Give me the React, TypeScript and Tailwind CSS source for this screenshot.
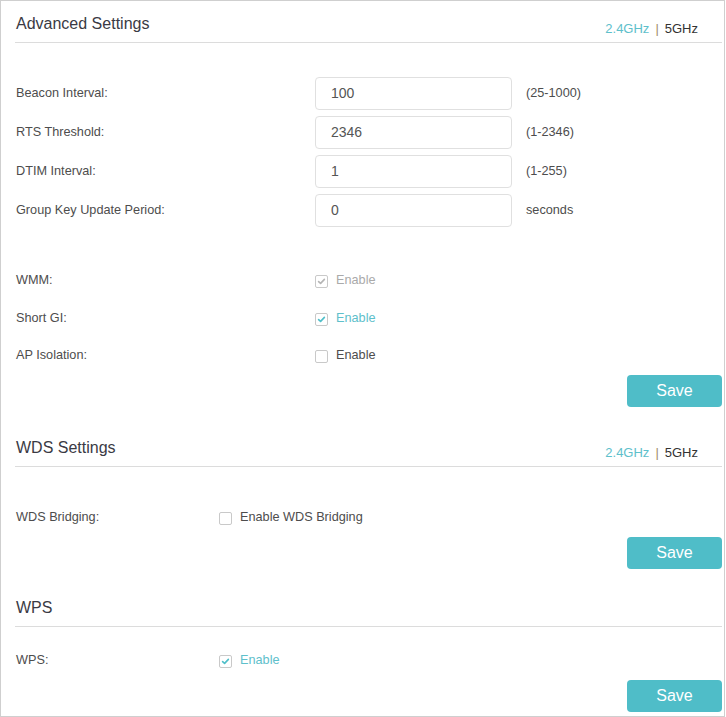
import React from "react";

const TEAL = "text-[#5ec0cb]";

function Check({ checked, disabled }: { checked?: boolean; disabled?: boolean }) {
  return (
    <span className="inline-flex w-[13px] h-[13px] border border-[#c9c9c9] rounded-[2px] bg-white items-center justify-center shrink-0">
      {checked && (
        <svg width="9" height="9" viewBox="0 0 9 9">
          <path
            d="M1.6 4.6 L3.6 6.4 L7.4 2.4"
            fill="none"
            stroke={disabled ? "#b5b5b5" : "#4fbfc9"}
            strokeWidth="1.6"
            strokeLinecap="round"
            strokeLinejoin="round"
          />
        </svg>
      )}
    </span>
  );
}

function Heading({ title, ghz, className }: { title: string; ghz?: boolean; className?: string }) {
  return (
    <div className={"h-[42px] pt-[14px] border-b border-[#dcdcdc] flex justify-between " + (className || "")}>
      <div className="text-[16px] leading-[18px] text-[#3a3a44] pl-[1px]">{title}</div>
      {ghz && (
        <div className="text-[13px] leading-[18px] pt-[1px] pr-[24px] flex items-center">
          <span className={TEAL}>2.4GHz</span>
          <span className="text-[#a08c6a] mx-[6px]">|</span>
          <span className="text-[#333]">5GHz</span>
        </div>
      )}
    </div>
  );
}

function InputRow({ label, value, hint }: { label: string; value: string; hint: string }) {
  return (
    <div className="flex items-center h-[33px] mb-[6px]">
      <div className="w-[300px] pl-[1px] text-[12.7px] text-[#4d4d4d]">{label}</div>
      <div className="w-[197px] h-[33px] border border-[#e0e0e0] rounded-[4px] flex items-center pl-[15px] text-[14px] text-[#555]">
        {value}
      </div>
      <div className="ml-[14px] text-[12.7px] text-[#4d4d4d]">{hint}</div>
    </div>
  );
}

function CheckRow({
  label,
  text,
  checked,
  disabled,
  labelW,
  className,
}: {
  label: string;
  text: string;
  checked?: boolean;
  disabled?: boolean;
  labelW: string;
  className?: string;
}) {
  const color = disabled ? "text-[#aaaaaa]" : checked ? TEAL : "text-[#4d4d4d]";
  return (
    <div className={"flex items-center h-[20px] " + (className || "")}>
      <div className={labelW + " pl-[1px] text-[12.7px] text-[#4d4d4d]"}>{label}</div>
      <Check checked={checked} disabled={disabled} />
      <span className={"ml-[8px] text-[12.7px] " + color}>{text}</span>
    </div>
  );
}

function Save({ className }: { className?: string }) {
  return (
    <div className={"flex justify-end " + (className || "")}>
      <button className="w-[95px] h-[32px] rounded-[4px] bg-[#4fbdc8] text-white text-[16px]">Save</button>
    </div>
  );
}

export default function App() {
  return (
    <div className="w-[725px] h-[717px] border border-[#cfcfcf] pl-[14px] pr-[2px] bg-white font-['Liberation_Sans',Arial,sans-serif]">
      <Heading title="Advanced Settings" ghz />
      <div className="mt-[34px]">
        <InputRow label="Beacon Interval:" value="100" hint="(25-1000)" />
        <InputRow label="RTS Threshold:" value="2346" hint="(1-2346)" />
        <InputRow label="DTIM Interval:" value="1" hint="(1-255)" />
        <InputRow label="Group Key Update Period:" value="0" hint="seconds" />
      </div>
      <CheckRow className="mt-[44px]" labelW="w-[300px]" label="WMM:" text="Enable" checked disabled />
      <CheckRow className="mt-[18px]" labelW="w-[300px]" label="Short GI:" text="Enable" checked />
      <CheckRow className="mt-[17px]" labelW="w-[300px]" label="AP Isolation:" text="Enable" />
      <Save className="mt-[9px]" />
      <Heading className="mt-[18px]" title="WDS Settings" ghz />
      <CheckRow className="mt-[41px]" labelW="w-[204px]" label="WDS Bridging:" text="Enable WDS Bridging" />
      <Save className="mt-[9px]" />
      <Heading className="mt-[16px]" title="WPS" />
      <CheckRow className="mt-[24px]" labelW="w-[204px]" label="WPS:" text="Enable" checked />
      <Save className="mt-[9px]" />
    </div>
  );
}
